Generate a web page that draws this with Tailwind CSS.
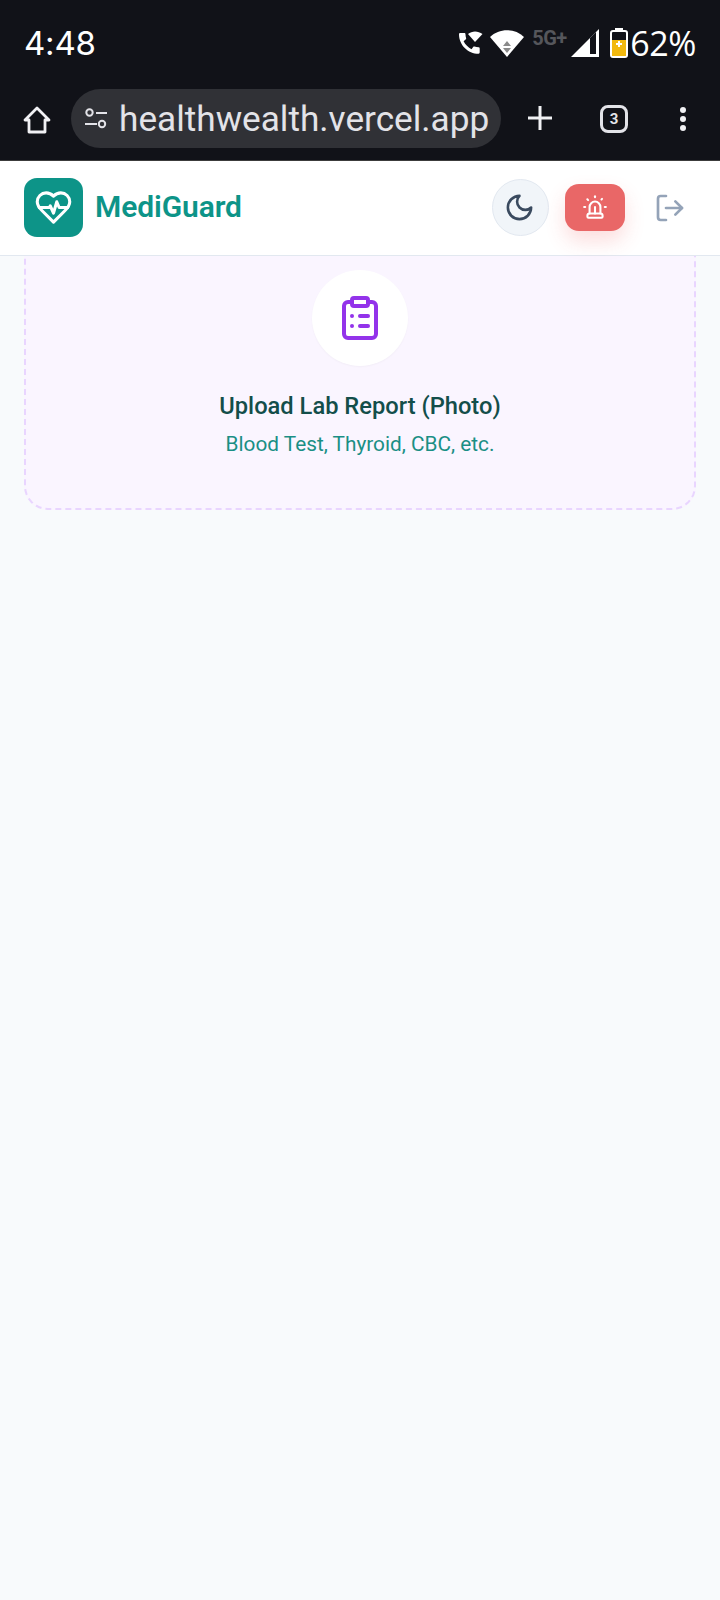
<!DOCTYPE html>
<html lang="en">
<head>
  <meta charset="UTF-8">
  <meta name="viewport" content="width=device-width, initial-scale=1.0">
  <title>MediGuard</title>
  <script src="https://cdn.jsdelivr.net/npm/@tailwindcss/browser@4"></script>
</head>
<body class="bg-[#f8fafc] h-[1600px] w-[720px] overflow-hidden flex flex-col font-['Roboto',sans-serif]">
  <!-- Phone status bar -->
  <div class="bg-[#111218] h-[84px] pl-[24px] pr-[24px] flex items-center justify-between shrink-0">
    <span class="text-white text-[33px] leading-none font-normal font-['Inter',sans-serif] tracking-[-0.2px] mt-[2px]">4:48</span>
    <div class="flex items-center h-[34px] mt-[2px]">
      <svg width="25" height="28" viewBox="0 0 25 28" class="mr-[7px]">
        <path transform="translate(-2.45 0.55) scale(1.15)" fill="#fff" d="M20.01 15.38c-1.23 0-2.42-.2-3.53-.56-.35-.12-.74-.03-1.01.24l-1.57 1.97c-2.83-1.35-5.48-3.9-6.89-6.83l1.95-1.66c.27-.28.35-.67.24-1.02-.37-1.11-.56-2.3-.56-3.53 0-.54-.45-.99-.99-.99H4.19C3.65 3 3 3.24 3 3.99 3 13.28 10.73 21 20.01 21c.71 0 .99-.63.99-1.18v-3.45c0-.54-.45-.99-.99-.99z"/>
        <path d="M9 5.5C13.5 1.5 20 1.5 25 5.5L17 14Z" fill="#111218"/>
        <path d="M10 5C14 1.5 20 1.5 24.5 5L17 13Z" fill="#fff"/>
      </svg>
      <svg width="34" height="28" viewBox="0 0 34 28" class="mr-[8px]">
        <path d="M0 8C9-1 25-1 34 8L17 28Z" fill="#fff"/>
        <path d="M17 12l4 5h-8ZM13 19h8l-4 5Z" fill="#8a8a8a"/>
      </svg>
      <span class="text-[#55565b] text-[20px] font-bold leading-none w-[36px] mb-[10px] tracking-[-0.5px]">5G+</span>
      <svg width="28" height="28" viewBox="0 0 28 28" class="ml-[3px] mr-[11px]">
        <path d="M0 28 28 0v28Z" fill="#fff"/>
        <path d="M19 9l6-6v22h-6Z" fill="#111218"/>
      </svg>
      <svg width="18" height="30" viewBox="0 0 18 30" class="mr-[2px]">
        <rect x="5" y="0" width="8" height="4" fill="#fff"/>
        <rect x="1" y="3" width="16" height="26" rx="2" fill="#111218" stroke="#fff" stroke-width="2"/>
        <rect x="2" y="12" width="14" height="16" fill="#f2b90f"/>
        <path d="M9 13v6M6 16h6" stroke="#fff" stroke-width="2"/>
      </svg>
      <span class="text-white text-[34px] leading-none font-['Open_Sans',sans-serif] font-normal tracking-[-0.4px]">62%</span>
    </div>
  </div>

  <!-- Browser toolbar -->
  <div class="bg-[#111218] h-[77px] border-b border-[#3c3c3c] flex items-start pl-[23px] shrink-0">
    <svg width="28" height="28" viewBox="0 0 28 28" fill="none" stroke="#f1f1f4" stroke-width="2.8" stroke-linejoin="round" stroke-linecap="round" class="mt-[22px] mr-[20px]">
      <path d="M2 14 14 2l12 12h-4v12H6V14Z"/>
    </svg>
    <div class="w-[430px] h-[59px] mt-[5px] bg-[#303136] rounded-full flex items-center pl-[13px] shrink-0">
      <svg width="24" height="24" viewBox="0 0 24 24" fill="none" stroke="#e3e3e8" stroke-width="2" class="mr-[11px] shrink-0">
        <circle cx="5.5" cy="5.5" r="3.2"/>
        <circle cx="18" cy="17" r="3.2"/>
        <path d="M12 6h11M1 17h12"/>
      </svg>
      <span class="text-[#e3e3e8] text-[35.2px] leading-none whitespace-nowrap mt-[2px]">healthwealth.vercel.app</span>
    </div>
    <svg width="26" height="26" viewBox="0 0 26 26" stroke="#f1f1f4" stroke-width="3" class="mt-[21px] ml-[26px]">
      <path d="M13 1v24M1 13h24"/>
    </svg>
    <div class="w-[28px] h-[28px] mt-[21px] ml-[47px] border-[3px] border-[#e3e3e8] rounded-[8px] flex items-center justify-center text-[#e3e3e8] text-[15px] font-bold leading-none">3</div>
    <div class="flex flex-col gap-[3px] mt-[23px] ml-[52px]">
      <div class="w-[6px] h-[6px] rounded-full bg-[#f1f1f4]"></div>
      <div class="w-[6px] h-[6px] rounded-full bg-[#f1f1f4]"></div>
      <div class="w-[6px] h-[6px] rounded-full bg-[#f1f1f4]"></div>
    </div>
  </div>

  <!-- App header -->
  <header class="bg-white h-[95px] border-b border-[#e2e8f0] flex items-center pl-[24px] pr-[24px] pb-[2px] shrink-0 relative z-10">
    <div class="w-[59px] h-[59px] rounded-[13px] bg-[#0d9488] flex items-center justify-center">
      <svg width="39" height="39" viewBox="0 0 24 24" fill="none" stroke="#fff" stroke-width="1.9" stroke-linecap="round" stroke-linejoin="round">
        <path d="M19 14c1.49-1.46 3-3.21 3-5.5A5.5 5.5 0 0 0 16.5 3c-1.76 0-3 .5-4.5 2-1.5-1.5-2.74-2-4.5-2A5.5 5.5 0 0 0 2 8.5c0 2.3 1.5 4.05 3 5.5l7 7Z"/>
        <path d="M3.22 12H9.5l.5-1 2 4.5 2-7 1.5 3.5h5.27"/>
      </svg>
    </div>
    <span class="ml-[12px] text-[#0d9488] text-[30px] font-semibold leading-none tracking-[-0.1px]">MediGuard</span>
    <div class="ml-auto flex items-center">
      <button class="w-[57px] h-[57px] rounded-full bg-[#f1f5f9] border border-[#e2e8f0] flex items-center justify-center">
        <svg width="31" height="31" viewBox="0 0 24 24" fill="none" stroke="#3a4a5f" stroke-width="2" stroke-linecap="round" stroke-linejoin="round" class="-ml-[2px]">
          <path d="M12 3a6 6 0 0 0 9 9 9 9 0 1 1-9-9Z"/>
        </svg>
      </button>
      <button class="w-[60px] h-[47px] ml-[16px] rounded-[14px] bg-[#e96767] shadow-[0_10px_20px_rgba(239,68,68,0.18)] flex items-center justify-center">
        <svg width="26" height="26" viewBox="0 0 24 24" fill="none" stroke="#fff" stroke-width="1.9" stroke-linecap="round" stroke-linejoin="round">
          <path d="M7 18v-6a5 5 0 1 1 10 0v6"/>
          <path d="M5 21a1 1 0 0 0 1 1h12a1 1 0 0 0 1-1v-1a2 2 0 0 0-2-2H7a2 2 0 0 0-2 2z"/>
          <path d="M21 12h1"/><path d="M18.5 4.5 18 5"/><path d="M2 12h1"/><path d="M12 2v1"/>
          <path d="m4.929 4.929.707.707"/><path d="M12 12v6"/>
        </svg>
      </button>
      <button class="w-[32px] h-[32px] ml-[29px] mr-[10px] mt-[1px] flex items-center justify-center">
        <svg width="32" height="32" viewBox="0 0 24 24" fill="none" stroke="#94a3b8" stroke-width="2" stroke-linecap="round" stroke-linejoin="round">
          <path d="M9 21H5a2 2 0 0 1-2-2V5a2 2 0 0 1 2-2h4"/>
          <polyline points="16 17 21 12 16 7"/>
          <line x1="21" x2="9" y1="12" y2="12"/>
        </svg>
      </button>
    </div>
  </header>

  <!-- Scrolled content -->
  <main class="flex-1 overflow-hidden px-[24px]">
    <div class="-mt-[40px] h-[294px] rounded-[24px] border-2 border-dashed border-[#e9d5ff] bg-[#faf5ff] flex flex-col items-center pt-[52px]">
      <div class="w-[96px] h-[96px] rounded-full bg-white shadow-[0_1px_2px_rgba(0,0,0,0.03)] flex items-center justify-center">
        <svg width="48" height="48" viewBox="0 0 24 24" fill="none" stroke="#9333ea" stroke-width="2" stroke-linecap="round" stroke-linejoin="round">
          <rect width="8" height="4" x="8" y="2" rx="1" ry="1"/>
          <path d="M16 4h2a2 2 0 0 1 2 2v14a2 2 0 0 1-2 2H6a2 2 0 0 1-2-2V6a2 2 0 0 1 2-2h2"/>
          <path d="M12 11h4"/><path d="M12 16h4"/><path d="M8 11h.01"/><path d="M8 16h.01"/>
        </svg>
      </div>
      <h3 class="mt-[24px] text-[#134e4a] text-[23.7px] font-medium leading-[32px]">Upload Lab Report (Photo)</h3>
      <p class="mt-[8px] text-[#1a8f85] text-[20.8px] leading-[28px]">Blood Test, Thyroid, CBC, etc.</p>
    </div>
  </main>
</body>
</html>
